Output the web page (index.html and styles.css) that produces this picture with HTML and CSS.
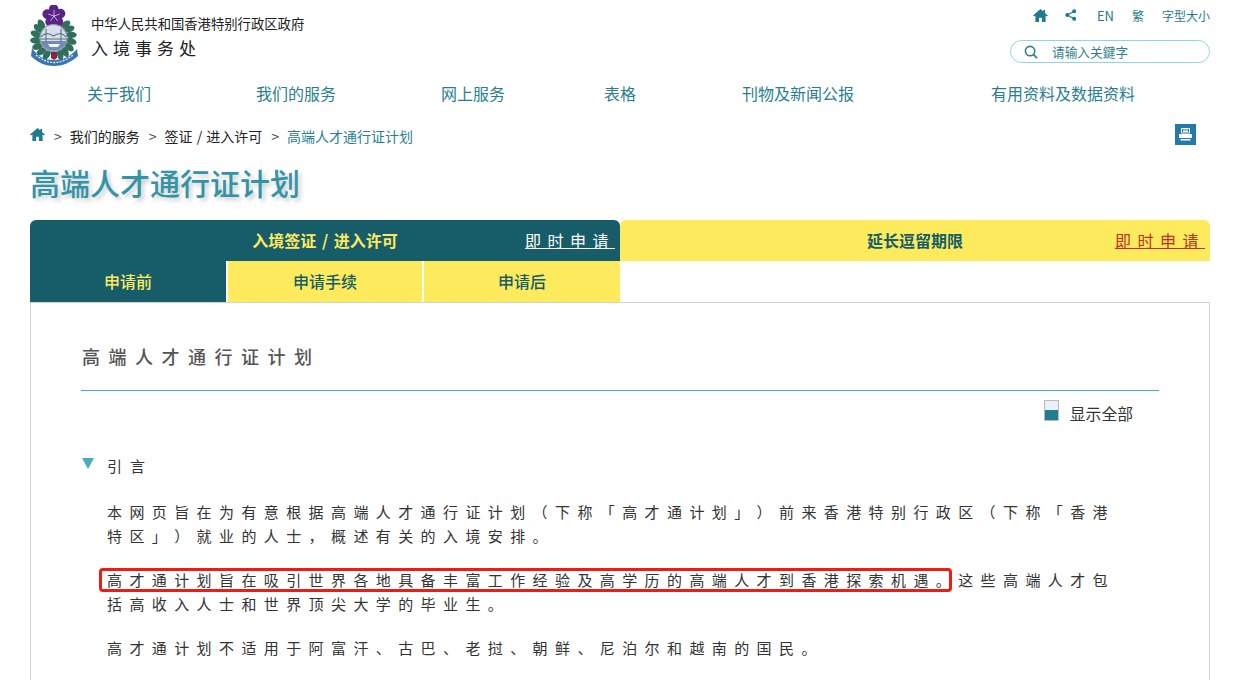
FILE: index.html
```html
<!DOCTYPE html>
<html lang="zh-CN">
    <head>
        <meta charset="utf-8" />
        <title>高端人才通行证计划</title>
        <link rel="stylesheet" href="styles.css">
    </head>
    <body>
        <div class="page">
            <div class="header">
                <div class="brand">
                    <svg class="emblem" width="50" height="62" viewBox="0 0 50 62">
                        <defs>
                            <path id="petal" d="M0 0C-5 -2 -7 -8 -3 -11C0 -13 5 -11 4.500 -6C4 -4 2 -3 0 0Z" />
                            <ellipse id="leaf" cx="23.500" cy="15" rx="3.200" ry="5.500" transform="rotate(12 23.500 15)" />
                        </defs>
                        <g fill="#2f6f5c">
                            <use href="#leaf" transform="rotate(202 23.500 33)" />
                            <use href="#leaf" transform="rotate(222 23.500 33)" />
                            <use href="#leaf" transform="rotate(242 23.500 33)" />
                            <use href="#leaf" transform="rotate(262 23.500 33)" />
                            <use href="#leaf" transform="rotate(282 23.500 33)" />
                            <use href="#leaf" transform="rotate(302 23.500 33)" />
                            <use href="#leaf" transform="rotate(318 23.500 33)" />
                            <use href="#leaf" transform="rotate(42 23.500 33)" />
                            <use href="#leaf" transform="rotate(60 23.500 33)" />
                            <use href="#leaf" transform="rotate(80 23.500 33)" />
                            <use href="#leaf" transform="rotate(100 23.500 33)" />
                            <use href="#leaf" transform="rotate(120 23.500 33)" />
                            <use href="#leaf" transform="rotate(140 23.500 33)" />
                            <use href="#leaf" transform="rotate(158 23.500 33)" />
                        </g>
                        <g fill="#5a2486" transform="translate(24 11)">
                            <use href="#petal" />
                            <use href="#petal" transform="rotate(72)" />
                            <use href="#petal" transform="rotate(144)" />
                            <use href="#petal" transform="rotate(216)" />
                            <use href="#petal" transform="rotate(288)" />
                        </g>
                        <g stroke="#e8dff0" stroke-width="0.700" transform="translate(24 11)">
                            <path d="M0 0V-6M0 0L5.700 -1.900M0 0L3.500 4.900M0 0L-3.500 4.900M0 0L-5.700 -1.900" />
                        </g>
                        <circle cx="23.500" cy="33" r="13.500" fill="#d7dfe9" stroke="#8b98a4" stroke-width="1.200" />
                        <path d="M10.500 36H36.500A13.500 13.500 0 0 1 10.500 36Z" fill="#6d8cb6" />
                        <path d="M16 24V37M31 24V37M11 32Q16 26 23.500 31Q31 26 36 32M10.500 34H36.500" stroke="#5f6f82" stroke-width="1.100" fill="none" />
                        <path d="M18 39H30L28 42H20Z" fill="#f3f5f7" />
                        <path d="M2 43C8 52 15 55 24 55C33 55 40 52 47 44L48 51C40 58 32 61 24 61C16 61 8 58 1 51Z" fill="#3b74b4" />
                        <path d="M6 50C12 55 18 57.500 24 57.500C30 57.500 37 55 43 50" stroke="#dfe8f2" stroke-width="1.400" stroke-dasharray="2 1.200" fill="none" />
                        <path d="M21 47H27V53L24 55L21 53Z" fill="#8c2146" />
                    </svg>
                    <div class="brand-text">
                        <div class="gov-name">中华人民共和国香港特别行政区政府</div>
                        <div class="dept-name">入境事务处</div>
                    </div>
                </div>
                <div class="tools">
                    <div class="tool-links">
                        <svg class="tool-home" width="15" height="13" viewBox="0 0 16 14"><path d="M8 0L0 7L1 8L2.500 7V14H6.500V9.500H9.500V14H13.500V7L15 8L16 7L13 4.500V1H11V2.800Z" fill="#1f7a8c" /></svg>
                        <svg class="tool-share" width="11" height="12" viewBox="0 0 12 13"><g fill="#1f7a8c"><circle cx="10" cy="2.500" r="2.200" /><circle cx="2.500" cy="6.500" r="2.200" /><circle cx="10" cy="10.500" r="2.200" /></g><path d="M10 2.500L2.500 6.500L10 10.500" stroke="#1f7a8c" stroke-width="1.200" fill="none" /></svg>
                        <span class="tool-en">EN</span>
                        <span class="tool-link">繁</span>
                        <span class="tool-link">字型大小</span>
                    </div>
                    <div class="search">
                        <svg width="14" height="14" viewBox="0 0 15 15"><circle cx="6.500" cy="6.500" r="5" stroke="#2f7f92" stroke-width="1.700" fill="none" /><path d="M10 10L14 14" stroke="#2f7f92" stroke-width="1.900" /></svg>
                        <span>请输入关鍵字</span>
                    </div>
                </div>
            </div>

            <div class="nav">
                <span class="nav-a">关于我们</span>
                <span class="nav-b">我们的服务</span>
                <span class="nav-c">网上服务</span>
                <span class="nav-d">表格</span>
                <span class="nav-e">刊物及新闻公报</span>
                <span class="nav-f">有用资料及数据资料</span>
            </div>

            <div class="crumbs">
                <svg class="crumb-home" width="15" height="13" viewBox="0 0 16 14"><path d="M8 0L0 7L1 8L2.500 7V14H6.500V9.500H9.500V14H13.500V7L15 8L16 7L13 4.500V1H11V2.800Z" fill="#1f7a8c" /></svg>
                <span class="sep">&gt;</span>
                <span class="crumb">我们的服务</span>
                <span class="sep">&gt;</span>
                <span class="crumb">签证 / 进入许可</span>
                <span class="sep">&gt;</span>
                <span class="crumb-now">高端人才通行证计划</span>
                <div class="print">
                    <svg width="13" height="13" viewBox="0 0 13 13"><path d="M2.500 0.500H10.500V5H2.500ZM4 2H9M4 3.500H9" stroke="#fff" fill="none" /><rect x="0" y="6" width="13" height="4" fill="#fff" /><rect x="1.500" y="11" width="10" height="1.500" fill="#fff" /></svg>
                </div>
            </div>

            <h1 class="title">高端人才通行证计划</h1>

            <div class="tabs-top">
                <div class="tab-main tab-on">
                    <span class="tab-name">入境签证 / 进入许可</span>
                    <span class="apply">即时申请</span>
                </div>
                <div class="tab-main tab-off">
                    <span class="tab-name">延长逗留期限</span>
                    <span class="apply">即时申请</span>
                </div>
            </div>
            <div class="tabs-sub">
                <div class="sub sub-on">申请前</div>
                <div class="sub sub-mid">申请手续</div>
                <div class="sub">申请后</div>
            </div>

            <div class="panel">
                <h2 class="panel-title">高端人才通行证计划</h2>
                <div class="show-all">
                    <span class="show-box"></span>
                    <span>显示全部</span>
                </div>
                <div class="section-head">
                    <span class="arrow"></span>
                    <span>引言</span>
                </div>
                <div class="section-body">
                    <p>本网页旨在为有意根据高端人才通行证计划（下称「高才通计划」）前来香港特别行政区（下称「香港特区」）就业的人士，概述有关的入境安排。</p>
                    <p><span class="mark">高才通计划旨在吸引世界各地具备丰富工作经验及高学历的高端人才到香港探索机遇。</span>这些高端人才包括高收入人士和世界顶尖大学的毕业生。</p>
                    <p>高才通计划不适用于阿富汗、古巴、老挝、朝鲜、尼泊尔和越南的国民。</p>
                </div>
            </div>
        </div>
    </body>
</html>
```

FILE: styles.css
```css
html, body {
    margin: 0;
    height: 680px;
    overflow: hidden;
    background: white;
}
body {
    font-family: "Noto Sans CJK SC", "Liberation Sans", sans-serif;
    color: #333;
    text-spacing-trim: space-all;
}
.page {
    width: 1180px;
    margin-left: 30px;
}
.header {
    display: flex;
    justify-content: space-between;
    height: 78px;
}
.brand {
    display: flex;
    padding-top: 5px;
}
.emblem {
    display: block;
}
.brand-text {
    margin-left: 11px;
    padding-top: 9px;
}
.gov-name {
    font-size: 13.330px;
    line-height: 20px;
    color: #222;
}
.dept-name {
    font-size: 17px;
    line-height: 27px;
    letter-spacing: 5px;
    color: #222;
}
.tools {
    width: 200px;
}
.tool-links {
    display: flex;
    justify-content: flex-end;
    align-items: center;
    height: 16px;
    margin-top: 7px;
    font-size: 12px;
    color: #1f7a8c;
}
.tool-home {
    margin-right: 17px;
}
.tool-share {
    margin-right: 21px;
}
.tool-en {
    font-size: 13px;
}
.tool-link {
    margin-left: 18px;
}
.search {
    display: flex;
    align-items: center;
    gap: 14px;
    box-sizing: border-box;
    height: 23px;
    margin-top: 17px;
    padding-left: 13px;
    border: 1px solid #8dd8e4;
    border-radius: 12px;
    font-size: 12.700px;
    color: #2f7f92;
}
.nav {
    display: flex;
    height: 36px;
    font-size: 16px;
    line-height: 30px;
    color: #2a7f8f;
}
.nav-a { margin-left: 57px; }
.nav-b { margin-left: 105px; }
.nav-c { margin-left: 105px; }
.nav-d { margin-left: 99px; }
.nav-e { margin-left: 106px; }
.nav-f { margin-left: 137px; }
.crumbs {
    display: flex;
    align-items: center;
    height: 32px;
    margin-top: 6px;
    font-size: 14px;
}
.crumb-home {
    margin-bottom: 4px;
}
.sep {
    margin: 0 8px 0 9px;
    color: #444;
}
.crumb {
    color: #222;
    word-spacing: 1px;
}
.crumb-now {
    color: #2a7f8f;
}
.print {
    display: flex;
    align-items: center;
    justify-content: center;
    width: 21px;
    height: 21px;
    margin-left: auto;
    margin-right: 14px;
    margin-bottom: 4px;
    background: #2479a8;
}
.title {
    margin: 0;
    padding-top: 10px;
    height: 58px;
    font-size: 30px;
    line-height: 40px;
    font-weight: 500;
    color: #3394a6;
    text-shadow: 3px 3px 4px #ccc;
}
.tabs-top {
    display: flex;
    height: 41px;
}
.tab-main {
    flex: 1;
    display: flex;
    align-items: center;
    justify-content: center;
    position: relative;
    border-radius: 6px 6px 0 0;
    font-size: 16px;
    font-weight: 700;
    word-spacing: 2px;
    padding-bottom: 2px;
    box-sizing: border-box;
}
.tab-on {
    background: #165d69;
    color: #fdeb5d;
}
.tab-off {
    background: #fdeb5d;
    color: #165d69;
}
.tab-name {
    display: block;
}
.apply {
    position: absolute;
    right: 5px;
    top: 9px;
    font-size: 16px;
    line-height: 22px;
    font-weight: 400;
    letter-spacing: 6.500px;
    text-decoration: underline;
    color: white;
}
.tab-off .apply {
    color: #b8321f;
}
.tabs-sub {
    display: flex;
    width: 590px;
    height: 41px;
}
.sub {
    flex: 1;
    box-sizing: border-box;
    border-left: 2px solid white;
    background: #fdeb5d;
    color: #165d69;
    font-size: 16px;
    font-weight: 500;
    line-height: 41px;
    text-align: center;
}
.sub-on {
    border-left: 0;
    flex: 0 0 196px;
    background: #165d69;
    color: #fdeb5d;
}
.sub-mid {
    flex: 0 0 196px;
}
.panel {
    box-sizing: border-box;
    height: 400px;
    padding: 0 50px;
    border: 1px solid #d4d4d4;
}
.panel-title {
    margin: 0;
    padding-left: 1px;
    height: 88px;
    border-bottom: 1px solid #3fb3c4;
    box-sizing: border-box;
    font-size: 18px;
    line-height: 106px;
    font-weight: 500;
    letter-spacing: 8.500px;
    color: #555;
}
.show-all {
    display: flex;
    justify-content: flex-end;
    align-items: center;
    gap: 11px;
    height: 44px;
    padding-right: 26px;
    font-size: 15.800px;
    color: #333;
}
.show-box {
    box-sizing: border-box;
    width: 15px;
    height: 21px;
    margin-bottom: 5px;
    border: 1px solid #bbb;
    background: linear-gradient(#e8f0f8 50%, #1f7f8f 50%);
}
.section-head {
    display: flex;
    align-items: center;
    height: 22px;
    margin-top: 19px;
    font-size: 15px;
    letter-spacing: 8px;
}
.arrow {
    width: 0;
    height: 0;
    margin: 0 13px 3px 1px;
    border-left: 6.500px solid transparent;
    border-right: 6.500px solid transparent;
    border-top: 11px solid #4bacbd;
}
.section-body {
    margin-top: 24px;
    padding: 0 42px 0 26px;
    font-size: 15px;
    line-height: 24px;
    letter-spacing: 7.400px;
}
.section-body p {
    margin: 0 0 20px;
}
.mark {
    position: relative;
}
.mark::after {
    content: "";
    position: absolute;
    top: -1px;
    bottom: -2px;
    left: -8px;
    right: 6px;
    border: 3px solid #f01b12;
    border-radius: 4px;
}
```
